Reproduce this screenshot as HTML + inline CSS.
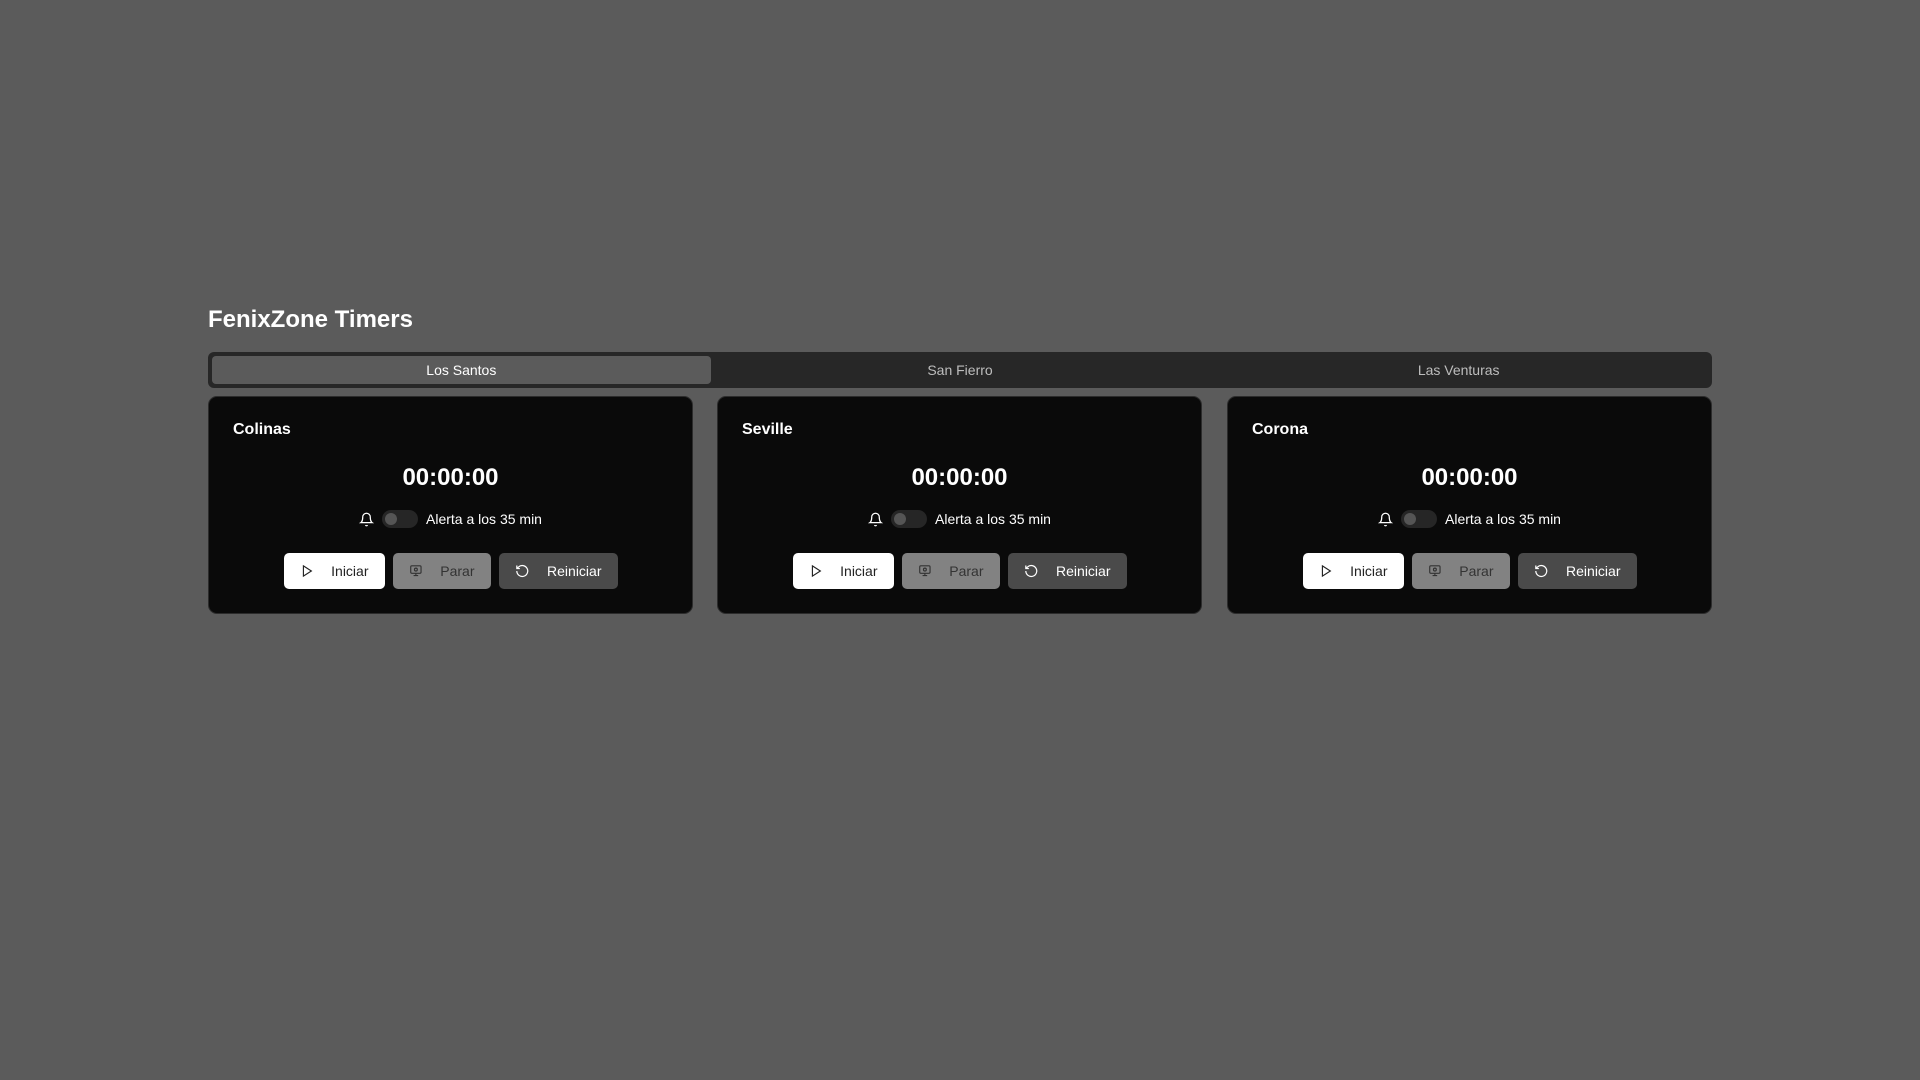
<!DOCTYPE html>
<html><head><meta charset="utf-8"><style>
*{box-sizing:border-box;margin:0;padding:0}
body{width:1920px;height:1080px;background:#5b5b5b;font-family:"Liberation Sans",Arial,sans-serif;position:relative;overflow:hidden}
h1{position:absolute;left:208px;top:306px;font-size:24px;font-weight:bold;color:#fff}
.tabs{position:absolute;left:208px;top:352px;width:1504px;height:36px;background:#272727;border-radius:6px;padding:4px;display:flex}
.tab{flex:1;height:28px;line-height:28px;text-align:center;font-size:14px;color:#bdbdbd;border-radius:4px}
.tab.on{background:#5b5b5b;color:#fff}
.card{position:absolute;top:396px;width:485px;height:218px;background:#0a0a0a;border:1px solid #2c2c2c;border-radius:9px}
.name{position:absolute;left:24px;top:24px;font-size:16px;font-weight:bold;color:#fff}
.time{position:absolute;left:0;right:0;top:67px;text-align:center;font-size:24px;font-weight:bold;color:#fff}
.alert{position:absolute;left:0;right:0;top:113px;display:flex;justify-content:center;align-items:center;font-size:14px;color:#fff}
.sw{width:36px;height:18px;border-radius:9px;background:#262626;margin:0 8px 0 8px;position:relative}
.sw:after{content:"";position:absolute;left:3px;top:3px;width:12px;height:12px;border-radius:50%;background:#555}
.btns{position:absolute;left:0;right:0;top:156px;display:flex;justify-content:center;gap:8px}
.b{height:36px;border-radius:5px;display:flex;align-items:center;font-size:14px;padding:0 16px;gap:18px}
.b svg{width:18px;height:18px}
.b1{background:#fff;color:#222;width:101px}
.b2{background:#828282;color:#333;width:98px}
.b3{background:#4a4a4a;color:#fff;width:119px}
</style></head><body>
<h1>FenixZone Timers</h1>
<div class="tabs"><div class="tab on">Los Santos</div><div class="tab">San Fierro</div><div class="tab">Las Venturas</div></div>
<div class="card" style="left:208px"><div class="name">Colinas</div><div class="time">00:00:00</div>
<div class="alert"><svg width="15" height="17" viewBox="0 0 24 24" fill="none" stroke="#fff" stroke-width="2"><path d="M6 8a6 6 0 0 1 12 0c0 7 3 9 3 9H3s3-2 3-9"/><path d="M10.3 21a1.9 1.9 0 0 0 3.4 0"/></svg><div class="sw"></div>Alerta a los 35 min</div>
<div class="btns"><div class="b b1"><svg viewBox="0 0 24 24" fill="none" stroke="#222" stroke-width="2"><path d="M6 3l14 9-14 9z"/></svg>Iniciar</div><div class="b b2"><svg viewBox="0 0 24 24" fill="none" stroke="#333" stroke-width="2"><rect x="3" y="3" width="18" height="13" rx="2"/><path d="M12 16v4M8 20h8"/><circle cx="12" cy="9.5" r="2.5"/></svg>Parar</div><div class="b b3"><svg viewBox="0 0 24 24" fill="none" stroke="#fff" stroke-width="2"><path d="M3 12a9 9 0 1 0 3-6.7L3 8"/><path d="M3 3v5h5"/></svg>Reiniciar</div></div></div>
<div class="card" style="left:717px"><div class="name">Seville</div><div class="time">00:00:00</div>
<div class="alert"><svg width="15" height="17" viewBox="0 0 24 24" fill="none" stroke="#fff" stroke-width="2"><path d="M6 8a6 6 0 0 1 12 0c0 7 3 9 3 9H3s3-2 3-9"/><path d="M10.3 21a1.9 1.9 0 0 0 3.4 0"/></svg><div class="sw"></div>Alerta a los 35 min</div>
<div class="btns"><div class="b b1"><svg viewBox="0 0 24 24" fill="none" stroke="#222" stroke-width="2"><path d="M6 3l14 9-14 9z"/></svg>Iniciar</div><div class="b b2"><svg viewBox="0 0 24 24" fill="none" stroke="#333" stroke-width="2"><rect x="3" y="3" width="18" height="13" rx="2"/><path d="M12 16v4M8 20h8"/><circle cx="12" cy="9.5" r="2.5"/></svg>Parar</div><div class="b b3"><svg viewBox="0 0 24 24" fill="none" stroke="#fff" stroke-width="2"><path d="M3 12a9 9 0 1 0 3-6.7L3 8"/><path d="M3 3v5h5"/></svg>Reiniciar</div></div></div>
<div class="card" style="left:1227px"><div class="name">Corona</div><div class="time">00:00:00</div>
<div class="alert"><svg width="15" height="17" viewBox="0 0 24 24" fill="none" stroke="#fff" stroke-width="2"><path d="M6 8a6 6 0 0 1 12 0c0 7 3 9 3 9H3s3-2 3-9"/><path d="M10.3 21a1.9 1.9 0 0 0 3.4 0"/></svg><div class="sw"></div>Alerta a los 35 min</div>
<div class="btns"><div class="b b1"><svg viewBox="0 0 24 24" fill="none" stroke="#222" stroke-width="2"><path d="M6 3l14 9-14 9z"/></svg>Iniciar</div><div class="b b2"><svg viewBox="0 0 24 24" fill="none" stroke="#333" stroke-width="2"><rect x="3" y="3" width="18" height="13" rx="2"/><path d="M12 16v4M8 20h8"/><circle cx="12" cy="9.5" r="2.5"/></svg>Parar</div><div class="b b3"><svg viewBox="0 0 24 24" fill="none" stroke="#fff" stroke-width="2"><path d="M3 12a9 9 0 1 0 3-6.7L3 8"/><path d="M3 3v5h5"/></svg>Reiniciar</div></div></div>
</body></html>
